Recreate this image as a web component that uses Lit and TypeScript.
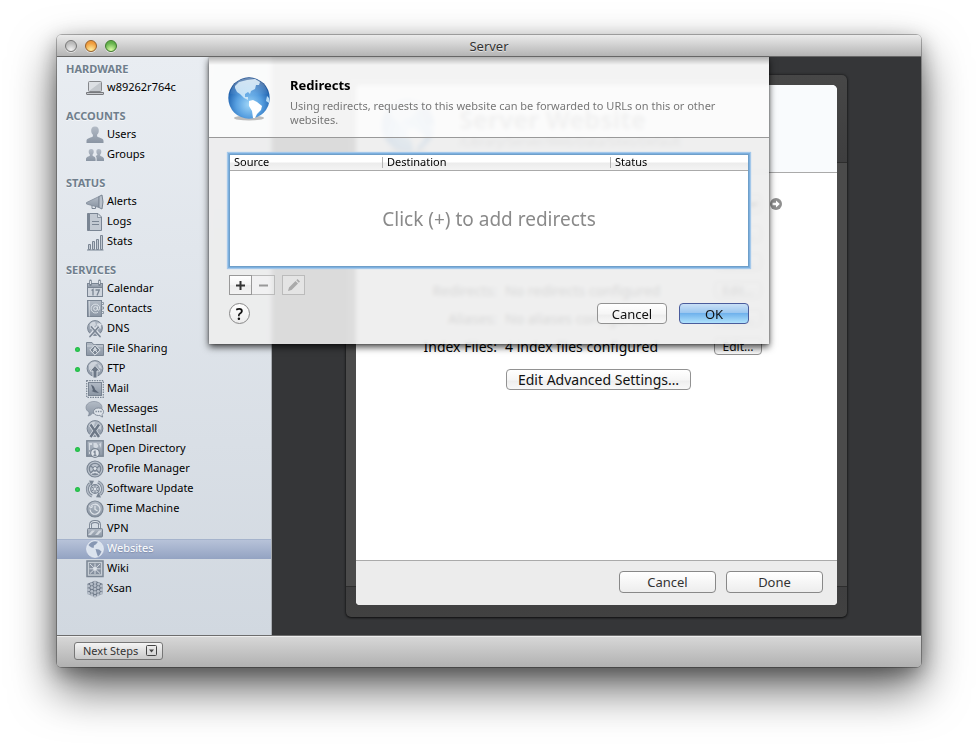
import { LitElement, html, svg, css, nothing } from "lit";
import { customElement, property } from "lit/decorators.js";
import { classMap } from "lit/directives/class-map.js";

const G = "url(#steel)";
const D = "#7a8593";
const L = "#dfe4ea";

const glyphs: Record<string, unknown> = {
  laptop: svg`<rect x="2.500" y="2.500" width="13" height="10" rx="1" fill="#dde0e4" stroke="#85878b"/><path d="M3 12 15 3v9z" fill="#c3c7cc"/><path d="M.5 13.500h17v1.500q0 .5-.5.5H1q-.5 0-.5-.5z" fill="#c9cbcf" stroke="#77797d"/>`,
  users: svg`<path d="M9 .5c2.800 0 4 1.800 3.800 4.500-.1 1.700-.8 3-1.700 3.800v1.700c1 .9 6.400 1.600 6.400 4.200V17H.5v-2.300c0-2.600 5.400-3.300 6.400-4.200V8.800C6 8 5.300 6.700 5.200 5 5 2.300 6.200.5 9 .5z" fill="${G}"/>`,
  groups: svg`<path d="M5.200 3c1.800 0 2.700 1.200 2.500 3 0 1.200-.6 2-1.100 2.500v1.200c.8.700 3 1 3 3.200V15H0v-2c0-2.200 3-2.500 3.800-3.300V8.500C3.300 8 2.700 7.200 2.700 6c-.2-1.800.7-3 2.500-3z" fill="${G}"/><path d="M12.800 3c1.800 0 2.700 1.200 2.500 3 0 1.200-.6 2-1.100 2.500v1.200c.8.800 3.800 1.100 3.800 3.300v2h-7.400v-2c0-2-.4-2.400-1-3 .7-.4 1.300-.6 1.800-.9V8.500c-.5-.5-1-1.300-1-2.500-.2-1.800.6-3 2.400-3z" fill="${G}"/>`,
  alerts: svg`<path d="M.5 9.500 13 3.500v11L.5 11z" fill="${G}" stroke="${D}" stroke-width=".7"/><path d="M6 12.500v3h3.500v-2.200" fill="none" stroke="${D}"/><path d="M13 3.500 16 2q2 6.800 0 14l-3-1.500z" fill="#b9c1cb" stroke="${D}"/>`,
  logs: svg`<path d="M1.500.5h2v17h-2z" fill="${D}" stroke="${D}"/><path d="M3.500.500H12L15.500 4v13.500h-12z" fill="#c3cad3" stroke="${D}"/><path d="M11.500 1v3.500H15" fill="${L}" stroke="${D}" stroke-width=".8"/><path d="M6 8.500h7M6 11.500h7" stroke="${D}" stroke-width="1.200"/>`,
  stats: svg`<path d="M2.500 11.500h2v5h-2zM6.500 8.500h2v8h-2zM10.500 6.500h2v10h-2zM14.500 2.500h2v14h-2z" fill="#c3cad3" stroke="${D}"/><path d="M1 17h16.500" stroke="${D}"/>`,
  calendar: svg`<rect x="1.500" y="3.500" width="15" height="13" fill="#cfd5dd" stroke="${D}"/><path d="M1.500 3.500h15v4h-15z" fill="${G}" stroke="${D}"/><path d="M4.500.8v4M13.500.8v4" stroke="${D}" stroke-width="2.600" stroke-linecap="round"/><path d="M4.500 1v3M13.500 1v3" stroke="${L}"/><path d="m5.500 10.500 1.500-1v6M9.500 10h3.800l-2.300 5.500" fill="none" stroke="${D}" stroke-width="1.300"/>`,
  contacts: svg`<rect x="1.500" y=".5" width="14" height="16" fill="${G}" stroke="${D}"/><path d="M3.500 1v15.500" stroke="${L}" stroke-width=".6"/><path d="M15.500 2.500h2v2h-2zM15.500 7h2v2h-2zM15.500 11.500h2v2h-2z" fill="${L}" stroke="${D}" stroke-width=".8"/><circle cx="9.500" cy="8.500" r="1.900" fill="none" stroke="${L}"/><path d="M11.400 6.500v3q.4 1.200 1.700.4 1-1.500.2-3.600A4.400 4.400 0 1 0 12 12.200" fill="none" stroke="${L}" stroke-width=".9"/>`,
  dns: svg`<circle cx="9" cy="8" r="7.400" fill="${G}" stroke="${D}"/><path d="M4 4q3-3 5-2l1 3-3 3-3 1zM11 3l4 2v4l-2-1z" fill="${L}" opacity=".7"/><path d="m4 16 8-9M14 16 6 7" stroke="${L}" stroke-width="3.400"/><path d="m4 16.500 8.500-9.500M14 16.500 5.500 7" stroke="${D}" stroke-width="1.700" stroke-linecap="round"/><path d="M11 5.500q1.500-2.500 4-1l-2 1.500 1.500 1.500" fill="none" stroke="${L}" stroke-width="1.200"/>`,
  folder: svg`<path d="M.5 15.500v-13h5.500l1.500 2h10v11z" fill="${G}" stroke="${D}"/><path d="M1 6h16" stroke="${L}" stroke-width=".7"/><path d="m9 4.800 5.200 5.200L9 15.200 3.800 10z" fill="${D}" stroke="${L}"/><circle cx="9" cy="8.300" r="1" fill="${L}"/><path d="m6.800 12.500 2.200-3 2.200 3M7 9.800h4" fill="none" stroke="${L}"/>`,
  ftp: svg`<circle cx="9" cy="8.500" r="7.900" fill="${G}" stroke="${D}"/><path d="M3 5q3-4 7-3l2 1-3 2-3 4-3 1zM12 4l3 2 1 3-3-1z" fill="${L}" opacity=".65"/><path d="m9 5.500 5 5.500h-3v7H7v-7H4z" fill="#6c7786" stroke="${L}" stroke-width=".9"/>`,
  mail: svg`<rect x=".7" y=".7" width="16.600" height="16.600" fill="${L}" stroke="${D}" stroke-width="1.200" stroke-dasharray="1.500 1"/><rect x="2.500" y="2.500" width="13" height="13" fill="${G}" stroke="${D}"/><path d="M5 4.500q3.500 1.500 4 5l4 3.500-4.500-.8L5.500 11l1.500-.8z" fill="#596474"/>`,
  messages: svg`<path d="M8 1.500c4.500 0 8 2.500 8 6s-3.500 6-8 6l-1.500-.2Q4.500 16 2 16q1.500-1.500 1-3.800C1.200 11 0 9.500 0 7.500c0-3.500 3.500-6 8-6z" fill="${G}" stroke="${D}" stroke-width=".6"/><path d="M12.500 8c3 0 5 1.600 5 3.700 0 1.300-.6 2.300-1.600 3l.8 2.300q-1.800-.2-2.800-1.600l-1.400.1c-3 0-5-1.600-5-3.800S9.500 8 12.500 8z" fill="${L}" stroke="${D}" stroke-width=".9"/><path d="M9.500 11.500h1.300M11.900 11.500h1.300M14.300 11.500h1.300" stroke="${D}" stroke-width="1.300"/>`,
  netinstall: svg`<circle cx="9" cy="8.500" r="7.900" fill="${G}" stroke="${D}"/><path d="M3 5q3-4 6-3l-1 4-3 3zM12 3l3 3v4l-3-2z" fill="${L}" opacity=".6"/><path d="M4.500 4.500 13 17M13 4.500 4.500 17" stroke="${L}" stroke-width="4"/><path d="M4.500 4.500 13 17M13 4.500 4.500 17" stroke="#6c7786" stroke-width="2.500"/>`,
  directory: svg`<rect x=".8" y=".8" width="16.400" height="15.400" fill="${G}" stroke="${D}" stroke-width="1.400"/><path d="M3 3h3v2H4v5H3zM7.500 3h3l2 3-2 3-3-2zM13 4l2-1v5zM3 12l3-1v3H3z" fill="${L}" opacity=".8"/><circle cx="9" cy="13" r="4.400" fill="${L}" stroke="${D}" stroke-width="1.200"/><path d="M9 10.500v5M7.500 12H9M7.500 15.300h3" stroke="${D}" stroke-width="1.300"/>`,
  profile: svg`<circle cx="9" cy="9" r="8" fill="#bac2cc" stroke="${D}" stroke-width="1.200"/><circle cx="9" cy="9" r="5.700" fill="none" stroke="${D}" stroke-width="1.300"/><path d="M9 9 4.500 6M9 9l4.500-3M9 9v5.500M9 9l-4 3.500M9 9l4 3.500" stroke="${D}" stroke-width="1.400"/><circle cx="9" cy="8.500" r="2" fill="${L}" stroke="${D}"/><path d="M5 14q4-3.500 8 0" fill="none" stroke="${L}"/>`,
  update: svg`<circle cx="9" cy="9" r="4.300" fill="#c3cad3" stroke="${D}" stroke-width="1.200"/><path d="M9 5v8M5.500 7l7 4M12.500 7l-7 4" stroke="${D}"/><circle cx="9" cy="9" r="1.200" fill="${L}"/><path d="M6 16A7.400 7.400 0 0 1 4 3.500M12 2a7.400 7.400 0 0 1 2 12.500" fill="none" stroke="${D}" stroke-width="3"/><path d="M6 16A7.400 7.400 0 0 1 4 3.500M12 2a7.400 7.400 0 0 1 2 12.500" fill="none" stroke="#b1b9c4" stroke-width="1.500"/><path d="m3 .5 5 .3-2.500 5zM15 17.500l-5-.3 2.500-5z" fill="${D}"/>`,
  time: svg`<circle cx="9" cy="9" r="8" fill="${G}" stroke="${D}" stroke-width="1.200"/><path d="M4.800 6.500A5 5 0 1 1 4 9.500" fill="none" stroke="${L}" stroke-width="1.200"/><path d="M3.300 5.500 4.500 8 7 6.500" fill="none" stroke="${L}"/><path d="M9 5.800v3.700l2.500 1.300" fill="none" stroke="${L}" stroke-width="1.200"/>`,
  vpn: svg`<path d="M4.500 9V4.500Q4.500 1.500 9 1.500t4.500 3V9" fill="none" stroke="${D}" stroke-width="2.800"/><path d="M4.500 9V4.500Q4.500 1.500 9 1.500t4.500 3V9" fill="none" stroke="${L}" stroke-width="1"/><rect x="1.500" y="8.500" width="15" height="8.500" rx="1" fill="${G}" stroke="${D}"/><path d="m2 15 4-4.500h3L5 15zM9 15l4-4.500h3L12 15z" fill="${L}" opacity=".8"/>`,
  websites: svg`<circle cx="9" cy="9" r="8.500" fill="#dbe3ee" stroke="#eef2f8" stroke-width=".6"/><path d="M2.500 5Q5 1.500 9 1.200l3 .6-2 2.400-2 1.200-.4 2.600-2-.4-1.600-1zM9.500 9l3.500.4 2.500 2.200-1.500 3-2 2.200-1.200-3.200z" fill="#8797b3"/>`,
  wiki: svg`<rect x="1" y="1" width="16" height="15.500" fill="#c6cdd5" stroke="${D}" stroke-width="1.500"/><rect x="3.500" y="3.500" width="11" height="10.500" fill="#8791a0" stroke="${D}" stroke-width=".6"/><path d="m4 4 10 9.500M14 4 4 13.500M9 3.500V14M3.500 8.800h11" stroke="${L}" stroke-width=".9"/><path d="m9 6.500 2.300 2.300L9 11 6.700 8.800z" fill="${L}"/>`,
  xsan: svg`<path d="m9 .8 7.500 3v10L9 17.300 1.500 13.800v-10z" fill="#6c7786"/><g fill="#b5bdc8"><circle cx="9" cy="2.500" r="1.500"/><circle cx="5.500" cy="3.900" r="1.500"/><circle cx="12.500" cy="3.900" r="1.500"/><circle cx="9" cy="5.500" r="1.500"/><circle cx="2.600" cy="6" r="1.500"/><circle cx="15.400" cy="6" r="1.500"/><circle cx="5.800" cy="7.500" r="1.500"/><circle cx="12.200" cy="7.500" r="1.500"/><circle cx="9" cy="9" r="1.500"/><circle cx="2.600" cy="9.700" r="1.500"/><circle cx="15.400" cy="9.700" r="1.500"/><circle cx="5.800" cy="11.200" r="1.500"/><circle cx="12.200" cy="11.200" r="1.500"/><circle cx="9" cy="12.600" r="1.500"/><circle cx="2.600" cy="13.200" r="1.500"/><circle cx="15.400" cy="13.200" r="1.500"/><circle cx="5.800" cy="14.700" r="1.500"/><circle cx="12.200" cy="14.700" r="1.500"/><circle cx="9" cy="16.200" r="1.500"/></g>`,
};

const globe = (size: number) => html`
  <svg class="globe" width=${size} height=${size + 2} viewBox="0 0 42 44" aria-hidden="true">
    <defs>
      <radialGradient id="sea" cx="50%" cy="66%" r="62%">
        <stop offset="0" stop-color="#9fd6f8" /><stop offset=".5" stop-color="#579fe0" />
        <stop offset=".85" stop-color="#2468b4" /><stop offset="1" stop-color="#174a8c" />
      </radialGradient>
      <linearGradient id="shine" x1="0" y1="0" x2="0" y2="1">
        <stop offset="0" stop-color="#fff" stop-opacity=".4" /><stop offset="1" stop-color="#fff" stop-opacity=".02" />
      </linearGradient>
    </defs>
    <ellipse cx="21" cy="41" rx="15" ry="2.500" fill="#000" opacity=".25" />
    <circle cx="21" cy="21" r="20.700" fill="url(#sea)" />
    <path d="M7 9 11 5l8-2 8-1 5 3-1 3-3 0-1 4-4 2-1 3-2-2-3 2 0 3 3 0 0 3-4-2-4-4-3-2-2-4z" fill="#d8edfa" opacity=".85" />
    <path d="m21 24 4-1 4 2 5 4-1 4-4 4-2 4h-2l-1-7-3-5z" fill="#fff" />
    <path d="m39 19 2 2v5l-3-2z" fill="#b9ddf6" />
    <path d="M2 17C4 6 12 1 21 1s17 5 19 16Q21 19 2 17z" fill="url(#shine)" />
  </svg>`;

interface Item { icon: string; name: string; on?: boolean; selected?: boolean; }
interface Group { title: string; items: Item[]; }

const groups: Group[] = [
  { title: "HARDWARE", items: [{ icon: "laptop", name: "w89262r764c" }] },
  { title: "ACCOUNTS", items: [{ icon: "users", name: "Users" }, { icon: "groups", name: "Groups" }] },
  {
    title: "STATUS",
    items: [{ icon: "alerts", name: "Alerts" }, { icon: "logs", name: "Logs" }, { icon: "stats", name: "Stats" }],
  },
  {
    title: "SERVICES",
    items: [
      { icon: "calendar", name: "Calendar" },
      { icon: "contacts", name: "Contacts" },
      { icon: "dns", name: "DNS" },
      { icon: "folder", name: "File Sharing", on: true },
      { icon: "ftp", name: "FTP", on: true },
      { icon: "mail", name: "Mail" },
      { icon: "messages", name: "Messages" },
      { icon: "netinstall", name: "NetInstall" },
      { icon: "directory", name: "Open Directory", on: true },
      { icon: "profile", name: "Profile Manager" },
      { icon: "update", name: "Software Update", on: true },
      { icon: "time", name: "Time Machine" },
      { icon: "vpn", name: "VPN" },
      { icon: "websites", name: "Websites", selected: true },
      { icon: "wiki", name: "Wiki" },
      { icon: "xsan", name: "Xsan" },
    ],
  },
];

const buttonStyles = css`
  button, select {
    font: inherit;
    color: #111;
    margin: 0;
    padding: 0;
    box-sizing: border-box;
  }
  .push {
    height: 21px;
    border: 1px solid #929292;
    border-radius: 4px;
    background: linear-gradient(#fff, #f6f6f6 50%, #eee 60%, #f8f8f8);
    font-size: 13px;
    line-height: 18px;
    white-space: nowrap;
  }
`;

@customElement("server-sidebar")
class ServerSidebar extends LitElement {
  @property({ attribute: false }) groups: Group[] = [];

  static styles = css`
    :host {
      display: block;
      width: 214px;
      flex: none;
      padding-top: 3px;
      border-right: 1px solid #a9adb2;
      background: linear-gradient(#e9edf2, #d1d8e0);
      box-sizing: content-box;
    }
    h2 {
      margin: 0;
      padding: 9px 9px 0;
      font-size: 11px;
      line-height: 18px;
      font-weight: 700;
      color: #6f7e8c;
      text-shadow: 0 1px 0 #fff9;
    }
    section:first-child h2 { padding-top: 0; }
    ul { list-style: none; margin: 0; padding: 0; }
    .item {
      display: flex;
      align-items: center;
      height: 20px;
      padding-left: 18px;
      color: #000;
      text-decoration: none;
      font-size: 11px;
    }
    .dot { width: 5px; height: 5px; margin-right: 6px; border-radius: 50%; }
    .on .dot { background: radial-gradient(#35d55a, #12a838); }
    .icon { width: 18px; height: 18px; margin-right: 3px; overflow: visible; }
    .name { line-height: 18px; padding-bottom: 2px; }
    .selected {
      color: #fff;
      background: linear-gradient(#b9c4da, #93a3c2);
      box-shadow: inset 0 1px 0 #a5b3cc;
      text-shadow: 0 1px 1px #5f6f8f88;
    }
  `;

  render() {
    return this.groups.map((g) => html`
      <section>
        <h2>${g.title}</h2>
        <ul>
          ${g.items.map((i) => html`
            <li>
              <a href="#" class=${classMap({ item: true, on: !!i.on, selected: !!i.selected })}>
                <span class="dot"></span>
                <svg class="icon" viewBox="0 0 18 18" aria-hidden="true">
                  <defs>
                    <linearGradient id="steel" x1="0" y1="0" x2="0" y2="1">
                      <stop offset="0" stop-color="#b3bbc6" /><stop offset="1" stop-color="#8a95a3" />
                    </linearGradient>
                  </defs>
                  ${glyphs[i.icon]}
                </svg>
                <span class="name">${i.name}</span>
              </a>
            </li>`)}
        </ul>
      </section>`);
  }
}

@customElement("site-card")
class SiteCard extends LitElement {
  static styles = [buttonStyles, css`
    :host {
      display: flex;
      flex: 1;
      min-width: 0;
      padding: 10px 10px 12px;
      border-radius: 5px;
      box-shadow: 0 0 3px #000a, 0 1px 2px #0008;
      background: linear-gradient(#474747, #3e3e3f) top / 100% 87px no-repeat,
        linear-gradient(#3f3f40, #414141) bottom / 100% 30px no-repeat,
        linear-gradient(#2d2d2d, #2d2d2d) top / 100% 88px no-repeat,
        linear-gradient(#2d2d2d, #2d2d2d) bottom / 100% 31px no-repeat,
        #4b4b4b;
    }
    .card {
      flex: 1;
      display: flex;
      flex-direction: column;
      min-height: 520px;
      border-radius: 5px 5px 4px 4px;
      overflow: hidden;
      background: #fff;
    }
    header {
      display: flex;
      align-items: center;
      gap: 24px;
      height: 88px;
      box-sizing: border-box;
      padding: 0 25px 4px;
      background: #f9fbfd;
      border-bottom: 1px solid #aaa;
    }
    h1 { margin: 0; font-size: 25px; line-height: 30px; }
    .path { font-size: 12px; line-height: 16px; color: #777; }
    .settings { flex: 1; padding: 15px 55px 15px 0; }
    .row {
      display: grid;
      grid-template-columns: 141px 1fr 48px 12px;
      column-gap: 8px;
      align-items: center;
      height: 28px;
      font-size: 14px;
      white-space: nowrap;
    }
    .first { height: 32px; }
    .label { text-align: right; }
    .edit { grid-column: 3; height: 18px; font-size: 12px; line-height: 15px; }
    .popup { grid-column: 2 / 4; width: 100%; height: 20px; }
    .go { grid-column: 4; width: 12px; height: 12px; border: 0; background: none; display: block; }
    .go svg { display: block; }
    .advanced { margin: 9px 0 0 150px; width: 185px; font-size: 14px; }
    footer {
      display: flex;
      justify-content: flex-end;
      gap: 10px;
      padding: 10px 14px 12px;
      background: #ececec;
      border-top: 1px solid #aaa;
    }
    footer .push { width: 97px; height: 22px; color: #333; background: linear-gradient(#fff, #ededed); border-color: #888; }
  `];

  private row(name: string, value: string, first = false) {
    return html`
      <div class=${classMap({ row: true, first })}>
        ${name ? html`<span class="label">${name}</span><span>${value}</span>` : nothing}
        ${first
          ? html`<select class="popup push" aria-label="Site"></select>
              <button class="go" aria-label="Open">
                <svg width="12" height="12" viewBox="0 0 12 12"><circle cx="6" cy="6" r="6" fill="#8f8f8f" /><path d="M2.500 4.800H6V2.500L9.800 6 6 9.500V7.200H2.500z" fill="#fff" /></svg>
              </button>`
          : html`<button class="edit push">Edit…</button>`}
      </div>`;
  }

  render() {
    return html`
      <div class="card">
        <header>
          ${globe(54)}
          <div>
            <h1>Server Website</h1>
            <div class="path">/Library/Server/Web/Data/Sites/Default</div>
          </div>
        </header>
        <div class="settings">
          ${this.row("", "", true)}
          ${this.row("", "")}
          ${this.row("", "")}
          ${this.row("Redirects:", "No redirects configured")}
          ${this.row("Aliases:", "No aliases configured")}
          ${this.row("Index Files:", "4 index files configured")}
          <button class="advanced push">Edit Advanced Settings…</button>
        </div>
        <footer>
          <button class="push">Cancel</button>
          <button class="push">Done</button>
        </footer>
      </div>`;
  }
}

@customElement("redirects-sheet")
class RedirectsSheet extends LitElement {
  static styles = [buttonStyles, css`
    :host {
      display: block;
      box-shadow: 0 0 2px #0006, 0 3px 7px #000b;
      backdrop-filter: blur(2px);
    }
    header {
      display: flex;
      gap: 20px;
      height: 81px;
      box-sizing: border-box;
      padding: 20px 20px 0 19px;
      border-bottom: 1px solid #999;
      background: linear-gradient(#0004, #0000 8px), #fbfbfbf5;
    }
    .globe { flex: none; }
    h1 { margin: 0; font-size: 13px; line-height: 16px; }
    p { margin: 6px 0 0; font-size: 11px; line-height: 14px; color: #777; }
    .body { padding: 16px 20px 20px; background: #edededE6; }
    .list {
      border: 1px solid #6f9fc9;
      box-shadow: 0 0 0 1px #7db0df, 0 0 1px 2px #a4c8ea;
      background: #fff;
      height: 113px;
      box-sizing: border-box;
    }
    table { width: 100%; height: 111px; border-collapse: separate; border-spacing: 0; table-layout: fixed; }
    th {
      box-sizing: border-box;
      height: 16px;
      padding: 0 4px 2px;
      text-align: left;
      font-size: 11px;
      line-height: 13px;
      font-weight: 400;
      border-bottom: 1px solid #aaa;
      background: linear-gradient(#fff 45%, #ececec 55%, #f4f4f4);
      position: relative;
    }
    th + th::before { content: ""; position: absolute; left: -1px; top: 2px; width: 1px; height: 11px; background: #b5b5b5; }
    .source { width: 153px; }
    .destination { width: 228px; }
    td { padding: 0; text-align: center; color: #8a8a8a; font-size: 19px; }
    .tools { display: flex; margin-top: 8px; }
    .tool {
      display: grid;
      place-items: center;
      width: 23px;
      height: 20px;
      border: 1px solid #999;
      background: linear-gradient(#fff, #f4f4f4 50%, #ebebeb 50%, #f3f3f3);
    }
    .tool:disabled { border-color: #bbb; background: #ffffff40; }
    .remove { border-left: 0; }
    .change { margin-left: 7px; }
    .actions { display: flex; gap: 12px; margin-top: 8px; }
    .actions .push { width: 70px; }
    .help {
      width: 21px;
      height: 21px;
      margin-right: auto;
      border: 1px solid #888;
      border-radius: 50%;
      background: linear-gradient(#fff, #ececec);
      font-size: 16px;
      line-height: 18px;
      font-weight: 600;
    }
    .actions .ok {
      border-color: #4a5c9c;
      background: linear-gradient(#c9e0f6, #9cc7f0 45%, #70b2ec 50%, #b0e2fc);
    }
  `];

  render() {
    return html`
      <header>
        ${globe(42)}
        <div>
          <h1>Redirects</h1>
          <p>Using redirects, requests to this website can be forwarded to URLs on this or other websites.</p>
        </div>
      </header>
      <div class="body">
        <div class="list">
          <table>
            <thead><tr><th class="source">Source</th><th class="destination">Destination</th><th>Status</th></tr></thead>
            <tbody><tr><td colspan="3">Click (+) to add redirects</td></tr></tbody>
          </table>
        </div>
        <div class="tools">
          <button class="tool" aria-label="Add"><svg width="9" height="9"><path d="M4.500 0v9M0 4.500h9" stroke="#333" stroke-width="2" /></svg></button>
          <button class="tool remove" aria-label="Remove" disabled><svg width="9" height="9"><path d="M0 4.500h9" stroke="#999" stroke-width="2" /></svg></button>
          <button class="tool change" aria-label="Change" disabled><svg width="12" height="12"><path d="M0 12 1 8.500 7.500 2 10 4.500 3.500 11zM8.300 1.200 9.500 0 12 2.500l-1.200 1.200z" fill="#aaa" /></svg></button>
        </div>
        <div class="actions">
          <button class="help" aria-label="Help">?</button>
          <button class="push">Cancel</button>
          <button class="push ok">OK</button>
        </div>
      </div>`;
  }
}

@customElement("app-root")
class AppRoot extends LitElement {
  static styles = [buttonStyles, css`
    :host {
      display: block;
      min-height: 100vh;
      box-sizing: border-box;
      padding: 35px 57px;
      background: #fff;
      font-family: "Noto Sans", "Open Sans", sans-serif;
      font-size: 11px;
    }
    .window {
      border-radius: 5px;
      box-shadow: 0 0 0 1px #0004, 0 22px 46px #0009, 0 6px 20px #0005;
    }
    .titlebar {
      display: grid;
      grid-template-columns: 1fr auto 1fr;
      align-items: center;
      height: 22px;
      box-sizing: border-box;
      padding: 0 8px;
      border-radius: 4px 4px 0 0;
      border-bottom: 1px solid #666;
      background: linear-gradient(#ebebeb, #b4b4b4);
      color: #333;
      font-size: 13px;
      text-shadow: 0 1px 0 #fff8;
    }
    .lights { display: flex; gap: 8px; }
    .light {
      width: 12px;
      height: 12px;
      border: 1px solid #777;
      border-radius: 50%;
      box-shadow: 0 1px 0 #fff8;
      background: radial-gradient(circle at 50% 90%, #f4f4f4, #b9b9b9 70%);
    }
    .amber { border-color: #96602a; background: radial-gradient(circle at 50% 90%, #fff0a0, #ef9a3a 70%); }
    .green { border-color: #3f7a2c; background: radial-gradient(circle at 50% 90%, #dcffa8, #62b04a 70%); }
    .content { position: relative; display: flex; min-height: 578px; }
    main {
      flex: 1;
      display: flex;
      min-width: 0;
      padding: 18px 74px;
      background: #353638;
    }
    .clip { position: absolute; inset: 0; overflow: hidden; }
    .sheet { width: 560px; max-width: 100%; margin: 0 auto; }
    .bottombar {
      height: 32px;
      box-sizing: border-box;
      padding: 6px 17px 0;
      border-top: 1px solid #6d6d6d;
      border-radius: 0 0 4px 4px;
      background: linear-gradient(#d8d8d8, #b1b1b1);
      box-shadow: inset 0 1px 0 #eee;
    }
    .next {
      display: flex;
      align-items: center;
      justify-content: space-between;
      width: 89px;
      height: 18px;
      padding: 0 5px 1px 8px;
      border: 1px solid #777;
      border-radius: 3px;
      background: linear-gradient(#f4f4f4, #c9c9c9);
      color: #333;
      font-size: 11px;
      line-height: 15px;
      white-space: nowrap;
    }
  `];

  render() {
    return html`
      <div class="window">
        <div class="titlebar">
          <div class="lights">
            <button class="light" aria-label="Close"></button>
            <button class="light amber" aria-label="Minimize"></button>
            <button class="light green" aria-label="Zoom"></button>
          </div>
          <span>Server</span>
        </div>
        <div class="content">
          <server-sidebar .groups=${groups}></server-sidebar>
          <main><site-card></site-card></main>
          <div class="clip"><redirects-sheet class="sheet" role="dialog"></redirects-sheet></div>
        </div>
        <div class="bottombar">
          <button class="next">Next Steps
            <svg width="11" height="11" viewBox="0 0 11 11"><rect x=".5" y=".5" width="10" height="10" rx="1" fill="none" stroke="#444" /><path d="M3 4.500h5L5.500 7.500z" fill="#444" /></svg>
          </button>
        </div>
      </div>`;
  }
}
